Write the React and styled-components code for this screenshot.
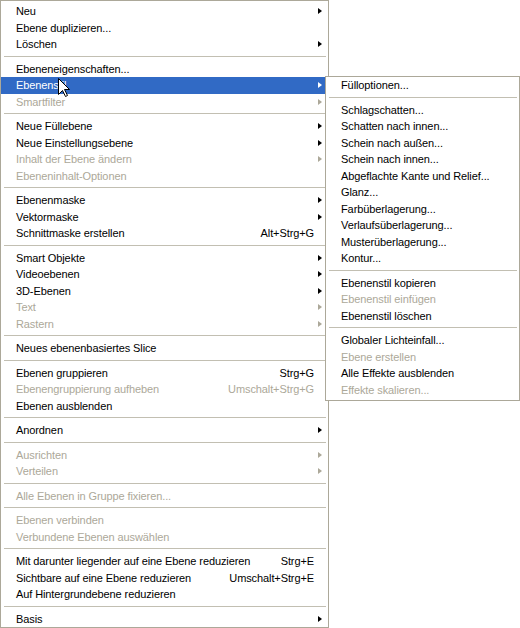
import React from 'react'
import styled, { createGlobalStyle } from 'styled-components'

const GlobalStyle = createGlobalStyle`
  html, body {
    margin: 0;
    padding: 0;
    background: #ffffff;
  }
  body {
    font-family: "Liberation Sans", Arial, sans-serif;
    font-size: 11px;
  }
`

// d = disabled, s = submenu arrow, k = shortcut
const mainGroups = [
  [
    { t: 'Neu', s: true },
    { t: 'Ebene duplizieren...' },
    { t: 'Löschen', s: true },
  ],
  [
    { t: 'Ebeneneigenschaften...' },
    { t: 'Ebenenstil', s: true, active: true },
    { t: 'Smartfilter', s: true, d: true },
  ],
  [
    { t: 'Neue Füllebene', s: true },
    { t: 'Neue Einstellungsebene', s: true },
    { t: 'Inhalt der Ebene ändern', s: true, d: true },
    { t: 'Ebeneninhalt-Optionen', d: true },
  ],
  [
    { t: 'Ebenenmaske', s: true },
    { t: 'Vektormaske', s: true },
    { t: 'Schnittmaske erstellen', k: 'Alt+Strg+G' },
  ],
  [
    { t: 'Smart Objekte', s: true },
    { t: 'Videoebenen', s: true },
    { t: '3D-Ebenen', s: true },
    { t: 'Text', s: true, d: true },
    { t: 'Rastern', s: true, d: true },
  ],
  [{ t: 'Neues ebenenbasiertes Slice' }],
  [
    { t: 'Ebenen gruppieren', k: 'Strg+G' },
    { t: 'Ebenengruppierung aufheben', k: 'Umschalt+Strg+G', d: true },
    { t: 'Ebenen ausblenden' },
  ],
  [{ t: 'Anordnen', s: true }],
  [
    { t: 'Ausrichten', s: true, d: true },
    { t: 'Verteilen', s: true, d: true },
  ],
  [{ t: 'Alle Ebenen in Gruppe fixieren...', d: true }],
  [
    { t: 'Ebenen verbinden', d: true },
    { t: 'Verbundene Ebenen auswählen', d: true },
  ],
  [
    { t: 'Mit darunter liegender auf eine Ebene reduzieren', k: 'Strg+E' },
    { t: 'Sichtbare auf eine Ebene reduzieren', k: 'Umschalt+Strg+E' },
    { t: 'Auf Hintergrundebene reduzieren' },
  ],
  [{ t: 'Basis', s: true }],
]

const styleGroups = [
  [{ t: 'Fülloptionen...' }],
  [
    { t: 'Schlagschatten...' },
    { t: 'Schatten nach innen...' },
    { t: 'Schein nach außen...' },
    { t: 'Schein nach innen...' },
    { t: 'Abgeflachte Kante und Relief...' },
    { t: 'Glanz...' },
    { t: 'Farbüberlagerung...' },
    { t: 'Verlaufsüberlagerung...' },
    { t: 'Musterüberlagerung...' },
    { t: 'Kontur...' },
  ],
  [
    { t: 'Ebenenstil kopieren' },
    { t: 'Ebenenstil einfügen', d: true },
    { t: 'Ebenenstil löschen' },
  ],
  [
    { t: 'Globaler Lichteinfall...' },
    { t: 'Ebene erstellen', d: true },
    { t: 'Alle Effekte ausblenden' },
    { t: 'Effekte skalieren...', d: true },
  ],
]

const MenuList = ({ groups }) => (
  <>
    {groups.map((group, gi) => (
      <React.Fragment key={gi}>
        {gi > 0 && <Separator />}
        {group.map((item) => (
          <Item key={item.t} $active={item.active} $disabled={item.d}>
            <Label>{item.t}</Label>
            {item.k && <Shortcut>{item.k}</Shortcut>}
            <ArrowSlot>{item.s && <Arrow />}</ArrowSlot>
          </Item>
        ))}
      </React.Fragment>
    ))}
  </>
)

const Cursor = () => (
  <CursorSvg width="13" height="20" viewBox="0 0 13 20">
    <path
      d="M0.5 0.5 L0.5 16.5 L4.5 12.5 L7.5 18.5 L9.5 17.5 L6.5 11.5 L11.5 11.5 Z"
      fill="#ffffff"
      stroke="#000000"
      strokeWidth="1"
      strokeLinejoin="miter"
    />
  </CursorSvg>
)

export default function App() {
  return (
    <Page>
      <GlobalStyle />
      <MainMenu>
        <MenuList groups={mainGroups} />
      </MainMenu>
      <SubMenu>
        <MenuList groups={styleGroups} />
      </SubMenu>
      <Cursor />
    </Page>
  )
}

const Page = styled.div`
  position: relative;
  width: 520px;
  height: 628px;
  overflow: hidden;
  background: #ffffff;
`

const Menu = styled.div`
  display: flex;
  flex-direction: column;
  box-sizing: border-box;
  background: #ffffff;
  border: 1px solid #aca899;
`

const MainMenu = styled(Menu)`
  width: 329px;
  padding: 2px 0 0;
`

const SubMenu = styled(Menu)`
  position: absolute;
  left: 325px;
  top: 76px;
  width: 195px;
  padding: 0 0 2px;
`

const Item = styled.div`
  display: flex;
  align-items: center;
  height: 16.5px;
  padding-left: 15px;
  white-space: nowrap;
  letter-spacing: -0.1px;
  color: ${(p) => (p.$active ? '#ffffff' : p.$disabled ? '#aca899' : '#000000')};
  background: ${(p) => (p.$active ? '#316ac5' : 'transparent')};
`

const Label = styled.span`
  flex: 1;
`

const Shortcut = styled.span`
  margin-right: 4px;
`

const ArrowSlot = styled.span`
  display: flex;
  align-items: center;
  justify-content: flex-start;
  width: 10px;
  height: 100%;
`

const Arrow = styled.span`
  width: 0;
  height: 0;
  border-left: 4px solid currentColor;
  border-top: 3.5px solid transparent;
  border-bottom: 3.5px solid transparent;
`

const Separator = styled.div`
  height: 8px;
  margin: 0 2px 0 3px;
  box-sizing: border-box;
  padding-top: 3px;

  &::before {
    content: '';
    display: block;
    height: 1px;
    background: #c2bfb2;
  }
`

const CursorSvg = styled.svg`
  position: absolute;
  left: 58px;
  top: 78px;
  display: block;
`
